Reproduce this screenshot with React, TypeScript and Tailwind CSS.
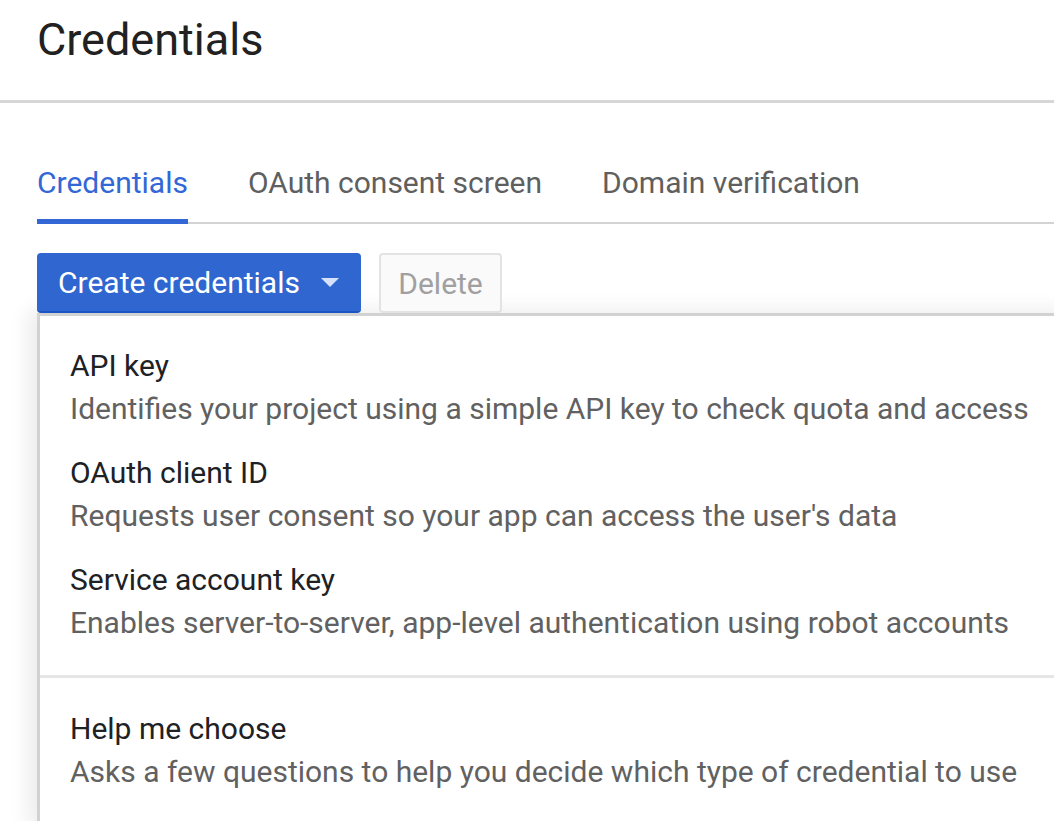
import React from 'react';

const menuItems = [
    {title: 'API key', desc: 'Identifies your project using a simple API key to check quota and access'},
    {title: 'OAuth client ID', desc: "Requests user consent so your app can access the user's data"},
    {title: 'Service account key', desc: 'Enables server-to-server, app-level authentication using robot accounts'},
];

const MenuItem = ({title, desc}: {title: string, desc: string}) => (
    <div className="pl-[30px] py-[10.5px]">
        <div className="text-[30px] leading-[43px] text-[#202124]">{title}</div>
        <div className="text-[30px] leading-[43px] text-[#616161] whitespace-nowrap">{desc}</div>
    </div>
);

const App = () => {
    return (
        <div className="w-[1054px] h-[821px] overflow-hidden bg-white font-['Roboto',sans-serif]">
            <div className="h-[103px] border-b-[3px] border-[#d6d6d6] pl-[37px] pt-[12px]">
                <h1 className="text-[45px] leading-[56px] text-[#212121]">Credentials</h1>
            </div>

            <div className="ml-[37px] mt-[39px] flex gap-[60px] border-b-2 border-[#d3d3d3]">
                <div className="pt-[23px] pb-[16px] border-b-[5px] border-[#3367d6] -mb-[2px] text-[30px] leading-[36px] text-[#3367d6]">
                    Credentials
                </div>
                <div className="pt-[23px] pb-[21px] text-[30px] leading-[36px] text-[#5f5f5f]">
                    OAuth consent screen
                </div>
                <div className="pt-[23px] pb-[21px] text-[30px] leading-[36px] text-[#5f5f5f]">
                    Domain verification
                </div>
            </div>

            <div className="ml-[37px] mt-[29px] flex gap-[18px]">
                <button className="h-[60px] w-[324px] rounded-[4px] bg-[#3066cf] border-b-2 border-[#1a55c4] flex items-center pl-[21px] text-white text-[30px]">
                    Create credentials
                    <svg className="ml-[21px]" width="18" height="9" viewBox="0 0 18 9">
                        <path d="M0 0 L18 0 L9 9 Z" fill="#d6e2fb"/>
                    </svg>
                </button>
                <button className="h-[60px] w-[123px] rounded-[4px] border-2 border-[#e3e3e3] bg-[#fafafa] text-[#a0a0a0] text-[30px]">
                    Delete
                </button>
            </div>

            <div className="ml-[37px] w-[1040px] h-[520px] bg-white border-t-[3px] border-l-[3px] border-[#d2d2d2] shadow-[-10px_-4px_18px_rgba(0,0,0,0.07)]">
                <div className="pt-[17px] pb-[21px]">
                    {menuItems.map((m) => (
                        <MenuItem key={m.title} title={m.title} desc={m.desc}/>
                    ))}
                </div>
                <div className="h-[3px] bg-[#e6e6e6]"/>
                <div className="pt-[18px]">
                    <MenuItem title="Help me choose" desc="Asks a few questions to help you decide which type of credential to use"/>
                </div>
            </div>
        </div>
    );
};

export default App;
